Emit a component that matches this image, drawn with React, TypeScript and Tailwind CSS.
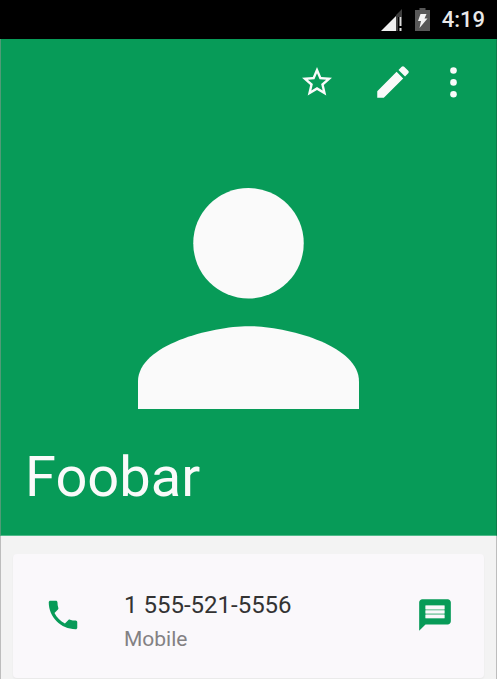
import React from "react";

function StatusBar() {
  return (
    <div className="flex h-[39px] items-center justify-end bg-black pr-3">
      <svg className="mr-3 h-6 w-[22px]" viewBox="0 0 22 24" role="img" aria-label="Mobile signal">
        <path d="M21 1v8h-4v14h-2V7z" fill="#3f3f3f" />
        <path d="M0 23L15 8v15z" fill="#f0f0f0" />
        <path d="M18.500 9h2v9h-2zM18.500 20h2v3h-2z" fill="#dcdcdc" />
      </svg>
      <svg className="mr-3 h-[23px] w-[15px]" viewBox="0 0 15 23" role="img" aria-label="Battery charging">
        <path d="M4.500 0h6v2H15v21H0V2h4.500z" fill="#585858" />
        <path d="M5.500 6h6l-2 4.500h3L4.500 20l1.500-7H3z" fill="#f4f4f4" />
      </svg>
      <span className="text-[22px] leading-6 font-medium text-[#e8e8e8]">4:19</span>
    </div>
  );
}

function Header() {
  return (
    <header className="flex h-[497px] flex-col border-x border-b border-b-[#4fba8a] border-l-[#4f9b76] border-r-[#0a7d49] bg-[#079b58] text-[#fafafa]">
      <div className="flex h-[86px] items-center justify-end pr-[18px]">
        <button type="button" aria-label="Add to favorites" className="mr-[37px]">
          <svg className="size-9" viewBox="0 0 24 24" fill="currentColor" aria-hidden="true">
            <path d="M22 9.240l-7.190-.62L12 2 9.190 8.630 2 9.240l5.460 4.730L5.820 21 12 17.270 18.180 21l-1.630-7.030L22 9.240zM12 15.400l-3.760 2.270 1-4.280-3.320-2.880 4.380-.38L12 6.100l1.710 4.040 4.380.38-3.320 2.880 1 4.280L12 15.400z" />
          </svg>
        </button>
        <button type="button" aria-label="Edit contact" className="mr-[14px]">
          <svg className="size-[42px]" viewBox="0 0 24 24" fill="currentColor" aria-hidden="true">
            <path d="M3 17.250V21h3.750L17.810 9.940l-3.750-3.750L3 17.250zM20.710 7.040c.39-.39.39-1.020 0-1.410l-2.340-2.340c-.39-.39-1.020-.39-1.410 0l-1.830 1.830 3.750 3.750 1.830-1.830z" />
          </svg>
        </button>
        <button type="button" aria-label="More options">
          <svg className="h-12 w-[50px]" viewBox="0 0 50 48" fill="currentColor" aria-hidden="true">
            <circle cx="25.500" cy="12.500" r="3.300" />
            <circle cx="25.500" cy="24.400" r="3.300" />
            <circle cx="25.500" cy="36.300" r="3.300" />
          </svg>
        </button>
      </div>
      <svg className="mt-[63px] size-[221px] self-center" viewBox="4 4 16 16" fill="currentColor" role="img" aria-label="Contact photo">
        <circle cx="12" cy="8" r="4" />
        <path d="M12 14c-2.670 0-8 1.340-8 4v2h16v-2c0-2.660-5.330-4-8-4z" />
      </svg>
      <h1 className="mt-auto mb-[26px] pl-6 text-[56px] leading-16 font-normal">Foobar</h1>
    </header>
  );
}

function PhoneCard() {
  return (
    <section className="flex h-[124px] items-center rounded-sm bg-[#faf8fb] px-[30px] pb-0.5 shadow-xs">
      <button type="button" aria-label="Call 1 555-521-5556" className="ml-px text-[#079b58]">
        <svg className="size-[38px]" viewBox="0 0 24 24" fill="currentColor" aria-hidden="true">
          <path d="M6.620 10.790c1.440 2.830 3.760 5.140 6.590 6.590l2.200-2.200c.27-.27.67-.36 1.020-.24 1.120.37 2.330.57 3.570.57.55 0 1 .45 1 1V20c0 .55-.45 1-1 1-9.390 0-17-7.610-17-17 0-.55.45-1 1-1h3.500c.55 0 1 .45 1 1 0 1.250.2 2.450.57 3.570.11.35.03.74-.25 1.020l-2.200 2.200z" />
        </svg>
      </button>
      <div className="ml-[42px] flex-1 pt-3">
        <p className="text-2xl leading-9 text-[#333333]">1 555-521-5556</p>
        <p className="text-[21px] leading-8 text-[#838183]">Mobile</p>
      </div>
      <button type="button" aria-label="Send message" className="text-[#079b58]">
        <svg className="size-[38px]" viewBox="0 0 24 24" fill="currentColor" aria-hidden="true">
          <path d="M20 2H4c-1.100 0-1.990.9-1.990 2L2 22l4-4h14c1.100 0 2-.9 2-2V4c0-1.100-.9-2-2-2z" />
          <path d="M6 6h12v8H6z" fill="#8fd0b0" />
          <path d="M6 6h12v2.200H6zM6 9.200h12v1.700H6zM6 12h12v2H6z" fill="#faf8fb" />
        </svg>
      </button>
    </section>
  );
}

export default function App() {
  return (
    <div className="flex min-h-screen flex-col bg-[#f3f3f3] font-[Roboto,sans-serif]">
      <StatusBar />
      <Header />
      <main className="flex-1 border-x border-[#bdbdbd] px-3 pt-[18px]">
        <PhoneCard />
      </main>
    </div>
  );
}
